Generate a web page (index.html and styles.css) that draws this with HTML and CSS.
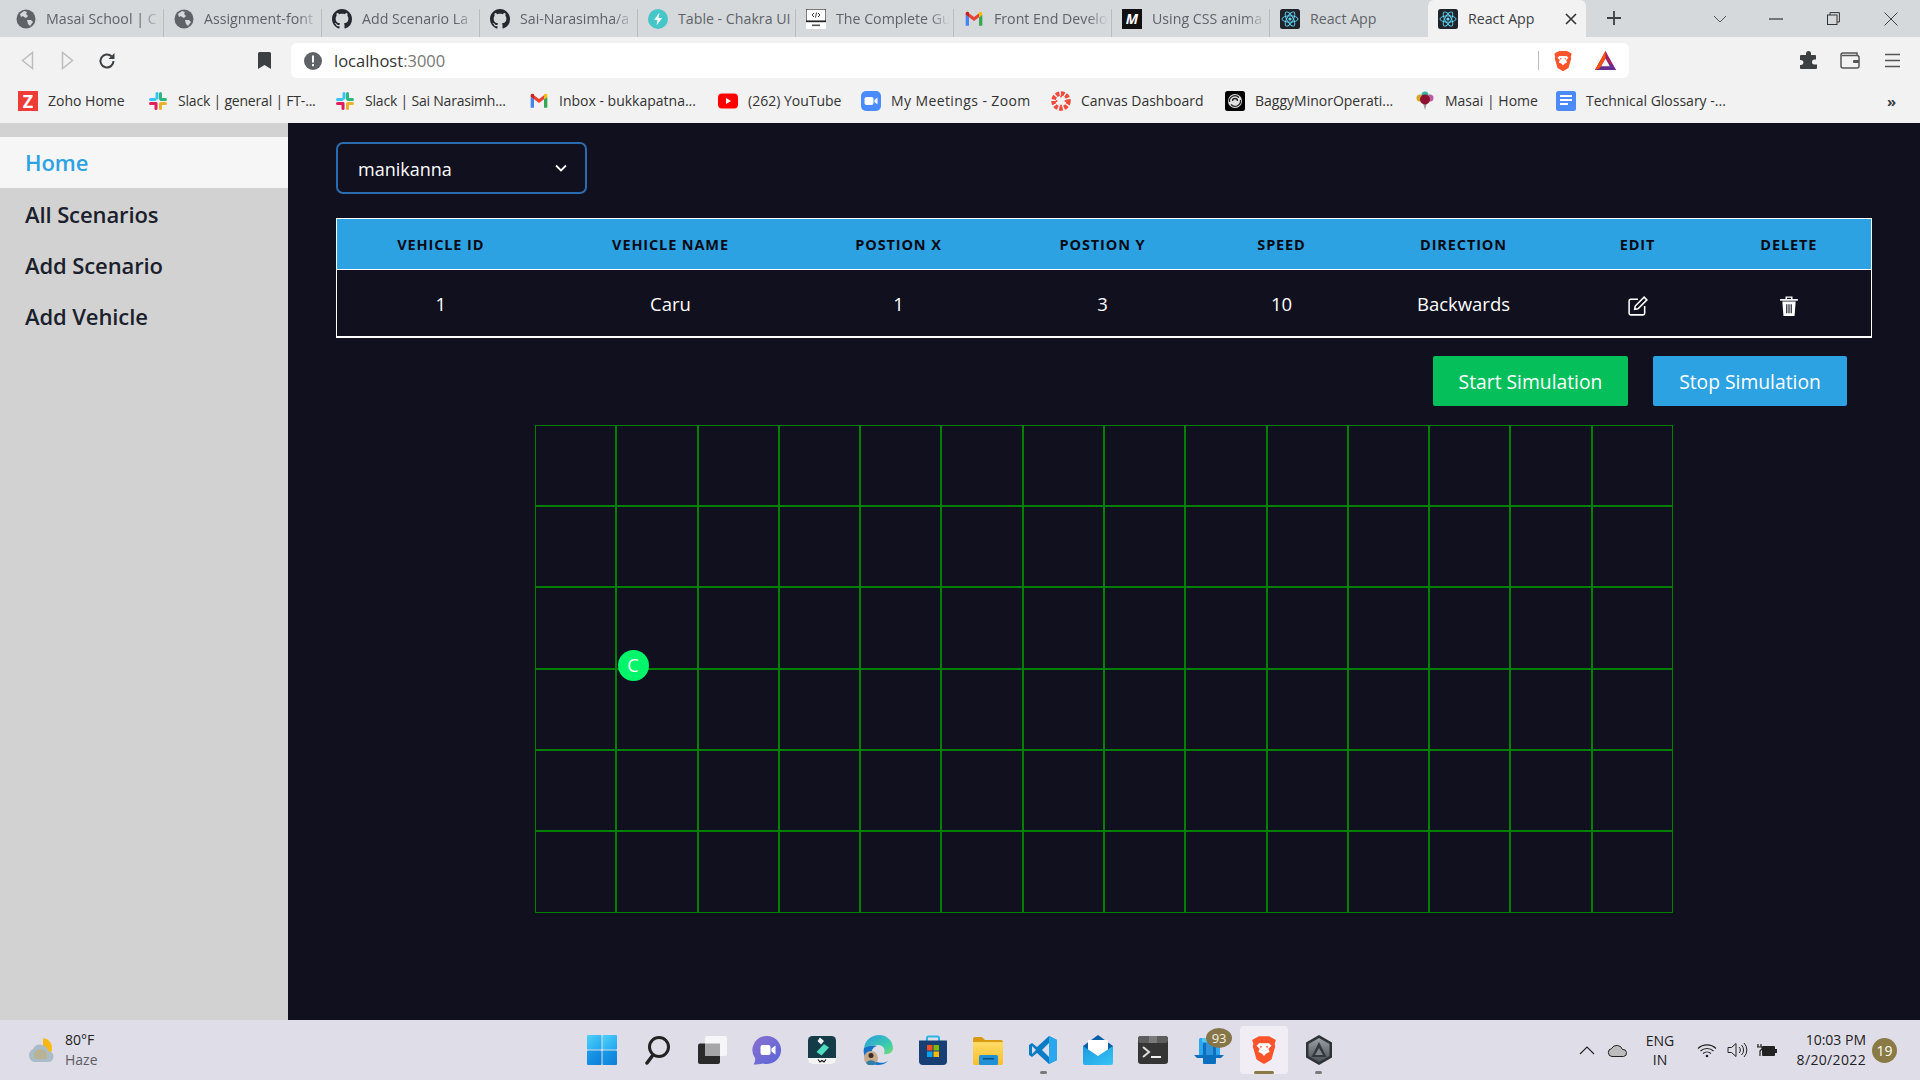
FILE: index.html
```html
<!DOCTYPE html>
<html lang="en">
<head>
  <meta charset="UTF-8" />
  <title>React App</title>
  <link rel="stylesheet" href="styles.css">
</head>
<body>
  <svg class="sprite" aria-hidden="true">
    <defs>
      <linearGradient id="winTop" x1="0" y1="0" x2="1" y2="1"><stop offset="0" stop-color="#4fd0fb"/><stop offset="1" stop-color="#1fa6ee"/></linearGradient>
      <linearGradient id="winBottom" x1="0" y1="0" x2="1" y2="1"><stop offset="0" stop-color="#1c9cea"/><stop offset="1" stop-color="#0c7fd8"/></linearGradient>
      <linearGradient id="chatGrad" x1="0" y1="0" x2="1" y2="1"><stop offset="0" stop-color="#8a70d0"/><stop offset="1" stop-color="#5a66d8"/></linearGradient>
      <linearGradient id="edgeGrad" x1="0" y1="0" x2="1" y2="1"><stop offset="0" stop-color="#2a9be0"/><stop offset=".7" stop-color="#3ecfa8"/><stop offset="1" stop-color="#7fdc6a"/></linearGradient>
      <linearGradient id="folderGrad" x1="0" y1="0" x2="0" y2="1"><stop offset="0" stop-color="#ffdc66"/><stop offset="1" stop-color="#f9bd2a"/></linearGradient>
      <linearGradient id="mailGrad" x1="0" y1="0" x2="1" y2="1"><stop offset="0" stop-color="#1b9ae0"/><stop offset="1" stop-color="#38c4f5"/></linearGradient>
      <linearGradient id="hexGrad" x1="0" y1="0" x2="0" y2="1"><stop offset="0" stop-color="#9aa0a6"/><stop offset="1" stop-color="#4a4f55"/></linearGradient>
    </defs>
    <symbol id="globe" viewBox="0 0 20 20">
      <circle cx="10" cy="10" r="9.500" fill="#5f6368"/>
      <path d="M4 5l4-3 3 1-1 2 2 2-2 2-2-1-1-1-2 1zM11 11l4 0 2 2-3 4-2-2z" fill="#d5d9dc"/>
    </symbol>
    <symbol id="github" viewBox="0 0 16 16">
      <path fill="#24292e" d="M8 0C3.58 0 0 3.58 0 8c0 3.54 2.29 6.53 5.47 7.59.4.07.55-.17.55-.38 0-.19-.01-.82-.01-1.49-2.01.37-2.53-.49-2.69-.94-.09-.23-.48-.94-.82-1.13-.28-.15-.68-.52-.01-.53.63-.01 1.08.58 1.23.82.72 1.21 1.87.87 2.33.66.07-.52.28-.87.51-1.07-1.78-.2-3.64-.89-3.64-3.95 0-.87.31-1.59.82-2.15-.08-.2-.36-1.02.08-2.12 0 0 .67-.21 2.2.82.64-.18 1.32-.27 2-.27.68 0 1.36.09 2 .27 1.53-1.04 2.2-.82 2.2-.82.44 1.1.16 1.92.08 2.12.51.56.82 1.27.82 2.15 0 3.07-1.87 3.75-3.65 3.95.29.25.54.73.54 1.48 0 1.07-.01 1.93-.01 2.2 0 .21.15.46.55.38A8.013 8.013 0 0016 8c0-4.42-3.58-8-8-8z"/>
    </symbol>
    <symbol id="chakra" viewBox="0 0 20 20">
      <circle cx="10" cy="10" r="10" fill="#45c7c9"/>
      <path d="M11.500 3.500L6 11h3.500l-1 5.500L14 9h-3.500z" fill="#fff"/>
    </symbol>
    <symbol id="monitor" viewBox="0 0 20 20">
      <rect width="20" height="20" fill="#fff"/>
      <rect x="0" y="0" width="20" height="12.500" fill="#fff" stroke="#222" stroke-width="1.200"/>
      <rect x="0" y="11.500" width="20" height="1.600" fill="#222"/>
      <path d="M8 4L6 6l2 2M12 4l2 2-2 2M10.500 3.500l-1 5" fill="none" stroke="#222" stroke-width=".9"/>
      <rect x="6" y="15.500" width="8" height="1.600" fill="#555"/>
    </symbol>
    <symbol id="gmail" viewBox="0 0 24 24">
      <path d="M2 20h4V10L2 7z" fill="#4285f4"/>
      <path d="M18 20h4V7l-4 3z" fill="#34a853"/>
      <path d="M18 5v5l4-3V5.500C22 3.500 19.700 2.700 18 4z" fill="#fbbc04"/>
      <path d="M6 10V5l6 4.500L18 5v5l-6 4.500z" fill="#ea4335"/>
      <path d="M2 5.500V7l4 3V5L6 4C4.300 2.700 2 3.500 2 5.500z" fill="#c5221f"/>
    </symbol>
    <symbol id="atom" viewBox="0 0 20 20">
      <rect width="20" height="20" rx="2.500" fill="#20232a"/>
      <g fill="none" stroke="#61dafb" stroke-width=".9">
        <ellipse cx="10" cy="10" rx="8" ry="3.200"/>
        <ellipse cx="10" cy="10" rx="8" ry="3.200" transform="rotate(60 10 10)"/>
        <ellipse cx="10" cy="10" rx="8" ry="3.200" transform="rotate(120 10 10)"/>
      </g>
      <circle cx="10" cy="10" r="1.600" fill="#61dafb"/>
    </symbol>
    <symbol id="slack" viewBox="0 0 20 20">
      <rect x="7.500" y="1" width="3" height="7.500" rx="1.500" fill="#36c5f0"/>
      <rect x="1" y="7" width="7.500" height="3" rx="1.500" fill="#36c5f0"/>
      <rect x="11.500" y="7" width="7.500" height="3" rx="1.500" fill="#2eb67d"/>
      <rect x="11" y="1" width="3" height="8" rx="1.500" fill="#2eb67d"/>
      <rect x="11.500" y="11" width="7.500" height="3" rx="1.500" fill="#ecb22e"/>
      <rect x="11" y="11.500" width="3" height="7.500" rx="1.500" fill="#ecb22e"/>
      <rect x="6.500" y="11" width="3" height="8" rx="1.500" fill="#e01e5a"/>
      <rect x="1" y="11" width="8" height="3" rx="1.500" fill="#e01e5a"/>
    </symbol>
    <symbol id="brave" viewBox="0 0 24 24">
      <path d="M5 2.500L8 1h8l3 1.500 2.500 1.500-1 3 .5 2-3 10.500L12.500 23h-1L6 19.500 3 9l.5-2-1-3z" fill="#fb542b"/>
      <path d="M8 6.500h8l2 2-2.500 2.500 1 2.500-3 1.500-1.500 2-1.500-2-3-1.500 1-2.500L6 8.500z" fill="#fff"/>
      <path d="M10.500 16.500h3l-1.500 1.500zM8.500 9h2l-1 1.500zM13.500 9h2l-1 1.500z" fill="#fb542b"/>
    </symbol>
  </svg>

  <header class="tabstrip">
    <div class="tab"><svg class="favicon"><use href="#globe"/></svg><span class="tab-title">Masai School | C</span></div>
    <div class="tab"><svg class="favicon"><use href="#globe"/></svg><span class="tab-title">Assignment-font</span></div>
    <div class="tab"><svg class="favicon"><use href="#github"/></svg><span class="tab-title">Add Scenario La</span></div>
    <div class="tab"><svg class="favicon"><use href="#github"/></svg><span class="tab-title">Sai-Narasimha/a</span></div>
    <div class="tab"><svg class="favicon"><use href="#chakra"/></svg><span class="tab-title tab-full">Table - Chakra UI</span></div>
    <div class="tab"><svg class="favicon"><use href="#monitor"/></svg><span class="tab-title">The Complete Gu</span></div>
    <div class="tab"><svg class="favicon"><use href="#gmail"/></svg><span class="tab-title">Front End Develo</span></div>
    <div class="tab"><span class="favicon medium-icon">M</span><span class="tab-title">Using CSS anima</span></div>
    <div class="tab tab-plain"><svg class="favicon"><use href="#atom"/></svg><span class="tab-title tab-full">React App</span></div>
    <div class="tab tab-active">
      <svg class="favicon"><use href="#atom"/></svg>
      <span class="tab-title tab-full">React App</span>
      <svg class="tab-close" viewBox="0 0 12 12"><path d="M1 1l10 10M11 1L1 11" stroke="#333" stroke-width="1.600"/></svg>
    </div>
    <svg class="new-tab" viewBox="0 0 16 16"><path d="M8 1v14M1 8h14" stroke="#3c4043" stroke-width="1.800"/></svg>
    <div class="win-controls">
      <div class="win-btn chevron-btn"><svg width="14" height="8" viewBox="0 0 14 8"><path d="M1 1l6 6 6-6" fill="none" stroke="#555" stroke-width="1"/></svg></div>
      <div class="win-btn"><svg width="14" height="2" viewBox="0 0 14 2"><path d="M0 1h14" stroke="#333" stroke-width="1.200"/></svg></div>
      <div class="win-btn"><svg width="13" height="13" viewBox="0 0 13 13"><path d="M3 3V.600h9.400V10H10" fill="none" stroke="#333"/><rect x=".5" y="3" width="9.500" height="9.500" fill="none" stroke="#333"/></svg></div>
      <div class="win-btn"><svg width="14" height="14" viewBox="0 0 14 14"><path d="M.5.500l13 13M13.500.500l-13 13" stroke="#444" stroke-width="1"/></svg></div>
    </div>
  </header>

  <div class="toolbar">
    <div class="tool-btn"><svg width="13" height="19" viewBox="0 0 13 19"><path d="M11.500 1.500v16L1.500 9.500z" fill="none" stroke="#bdbdbd" stroke-width="1.500"/></svg></div>
    <div class="tool-btn"><svg width="13" height="19" viewBox="0 0 13 19"><path d="M1.500 1.500v16l10-8z" fill="none" stroke="#bdbdbd" stroke-width="1.500"/></svg></div>
    <div class="tool-btn"><svg width="18" height="18" viewBox="0 0 18 18"><path d="M15.500 9a6.500 6.500 0 1 1-2-4.700" fill="none" stroke="#3c4043" stroke-width="2"/><path d="M16.500 1v6h-6z" fill="#3c4043"/></svg></div>
    <div class="tool-btn bookmark-btn"><svg width="13" height="17" viewBox="0 0 13 17"><path d="M0 1.500Q0 0 1.500 0h10Q13 0 13 1.500V17l-6.500-4L0 17z" fill="#3c4043"/></svg></div>
    <div class="address">
      <svg class="info-icon" viewBox="0 0 18 18"><circle cx="9" cy="9" r="9" fill="#5f6368"/><rect x="8" y="3.500" width="2" height="7" fill="#fff"/><rect x="8" y="12" width="2" height="2.200" fill="#fff"/></svg>
      <span class="url">localhost<span class="url-port">:3000</span></span>
      <span class="address-sep"></span>
      <svg class="brave-btn"><use href="#brave"/></svg>
      <svg class="bat-btn" viewBox="0 0 24 22"><path d="M12 1l11 20H1z" fill="#9e1f63"/><path d="M1 21l4-6h14l4 6z" fill="#662d91"/><path d="M12 1L1 21l5-2L12 8z" fill="#ff5000"/><path d="M12 9l-4.500 8h9z" fill="#f2f2f2"/></svg>
    </div>
    <div class="tool-right">
      <div class="tool-btn"><svg width="19" height="19" viewBox="0 0 19 19"><path d="M7 2.500a2.500 2.500 0 0 1 5 0V4h4a1 1 0 0 1 1 1v3.500h-1.500a2.500 2.500 0 0 0 0 5H18V17a1 1 0 0 1-1 1H2a1 1 0 0 1-1-1v-3h1a2.500 2.500 0 0 0 0-5H1V5a1 1 0 0 1 1-1h5z" fill="#3c4043"/></svg></div>
      <div class="tool-btn"><svg width="20" height="17" viewBox="0 0 20 17"><path d="M17 3.500V1H3Q1 1 1 3v11q0 2 2 2h14q2 0 2-2V5.500q0-2-2-2H2" fill="none" stroke="#555" stroke-width="1.500"/><rect x="13" y="8" width="6" height="3" rx="1" fill="#555"/></svg></div>
      <div class="tool-btn"><svg width="17" height="15" viewBox="0 0 17 15"><path d="M1 1.500h15M1 7.500h15M1 13.500h15" stroke="#555" stroke-width="1.600"/></svg></div>
    </div>
  </div>

  <nav class="bookmarks">
    <div class="bm"><span class="bm-icon zoho-icon">Z</span><span>Zoho Home</span></div>
    <div class="bm"><svg class="bm-icon"><use href="#slack"/></svg><span class="bm-tight">Slack | general | FT-...</span></div>
    <div class="bm"><svg class="bm-icon"><use href="#slack"/></svg><span class="bm-tight">Slack | Sai Narasimh...</span></div>
    <div class="bm"><svg class="bm-icon"><use href="#gmail"/></svg><span>Inbox - bukkapatna...</span></div>
    <div class="bm"><svg class="bm-icon" viewBox="0 0 20 20"><rect y="2.500" width="20" height="15" rx="4" fill="#f00"/><path d="M8 7v6l5-3z" fill="#fff"/></svg><span>(262) YouTube</span></div>
    <div class="bm"><svg class="bm-icon" viewBox="0 0 20 20"><rect width="20" height="20" rx="5" fill="#4a8cff"/><rect x="3.500" y="6" width="9" height="8" rx="2" fill="#fff"/><path d="M13.500 9l3-2.500v7l-3-2.500z" fill="#fff"/></svg><span class="bm-wide">My Meetings - Zoom</span></div>
    <div class="bm"><svg class="bm-icon" viewBox="0 0 20 20"><circle cx="10" cy="10" r="7.500" fill="none" stroke="#ef4a3c" stroke-width="4.500" stroke-dasharray="3.500 1.500"/><circle cx="10" cy="5.500" r="1" fill="#ef4a3c"/><circle cx="10" cy="14.500" r="1" fill="#ef4a3c"/><circle cx="5.500" cy="10" r="1" fill="#ef4a3c"/><circle cx="14.500" cy="10" r="1" fill="#ef4a3c"/></svg><span>Canvas Dashboard</span></div>
    <div class="bm"><svg class="bm-icon" viewBox="0 0 20 20"><rect width="20" height="20" rx="2.500" fill="#000"/><circle cx="10" cy="10" r="7" fill="#e2e2e2"/><path d="M4.500 11a5.500 5.500 0 0 1 9.500-4.500M15.500 9a5.500 5.500 0 0 1-9.500 4.500M7.500 10a2.500 2.500 0 0 1 5 0" fill="none" stroke="#222" stroke-width="1.300"/></svg><span>BaggyMinorOperati...</span></div>
    <div class="bm"><svg class="bm-icon" viewBox="0 0 20 20"><path d="M8 12l2 7h0l2-7z" fill="#9a9a9a"/><circle cx="5" cy="7" r="3.500" fill="#d9a520"/><circle cx="15" cy="7" r="3.500" fill="#c05aa0"/><circle cx="10" cy="4" r="3.500" fill="#36b4a0"/><circle cx="10" cy="8.500" r="5" fill="#8c1230"/></svg><span>Masai | Home</span></div>
    <div class="bm"><svg class="bm-icon" viewBox="0 0 20 20"><rect width="20" height="20" rx="2.500" fill="#4c8bf5"/><path d="M4 5h12M4 9h12M4 13h8" stroke="#fff" stroke-width="2"/></svg><span>Technical Glossary -...</span></div>
    <div class="bm-more">»</div>
  </nav>

  <div class="app">
    <aside class="sidebar">
      <a class="side-link side-active">Home</a>
      <a class="side-link">All Scenarios</a>
      <a class="side-link">Add Scenario</a>
      <a class="side-link">Add Vehicle</a>
    </aside>

    <main class="content">
      <div class="select-wrap">
        <select class="scenario-select" aria-label="Scenario">
          <option>manikanna</option>
        </select>
        <svg class="select-arrow" viewBox="0 0 12 8"><path d="M1 1.500l5 5 5-5" fill="none" stroke="#fff" stroke-width="1.800"/></svg>
      </div>

      <table class="vehicles">
        <colgroup>
          <col class="c1"><col class="c2"><col class="c3"><col class="c4"><col class="c5"><col class="c6"><col class="c7"><col class="c8">
        </colgroup>
        <thead>
          <tr>
            <th>Vehicle ID</th>
            <th>Vehicle Name</th>
            <th>Postion X</th>
            <th>Postion Y</th>
            <th>Speed</th>
            <th>Direction</th>
            <th>Edit</th>
            <th>Delete</th>
          </tr>
        </thead>
        <tbody>
          <tr>
            <td>1</td>
            <td>Caru</td>
            <td>1</td>
            <td>3</td>
            <td>10</td>
            <td>Backwards</td>
            <td><svg class="row-icon" viewBox="0 0 18 18"><path d="M9 3H2.500Q1 3 1 4.500v11Q1 17 2.500 17h11q1.500 0 1.500-1.500V9" fill="none" stroke="#fff" stroke-width="1.400"/><path d="M14.500 1L17 3.500 9 11.500l-3 .5.5-3z" fill="none" stroke="#fff" stroke-width="1.400"/></svg></td>
            <td><svg class="row-icon" viewBox="0 0 18 18"><path d="M1 3.500h16" stroke="#fff" stroke-width="1.500"/><path d="M6.500 3V1h5v2" fill="none" stroke="#fff" stroke-width="1.300"/><path d="M3 5h12l-1 13H4z" fill="#fff"/><path d="M7 7.500v8M9 7.500v8M11 7.500v8" stroke="#10101e" stroke-width="1"/></svg></td>
          </tr>
        </tbody>
      </table>

      <div class="sim-actions">
        <button class="sim-btn start-btn">Start Simulation</button>
        <button class="sim-btn stop-btn">Stop Simulation</button>
      </div>

      <div class="sim-grid">
        <div class="cell"></div><div class="cell"></div><div class="cell"></div><div class="cell"></div><div class="cell"></div><div class="cell"></div><div class="cell"></div><div class="cell"></div><div class="cell"></div><div class="cell"></div><div class="cell"></div><div class="cell"></div><div class="cell"></div><div class="cell"></div>
        <div class="cell"></div><div class="cell"></div><div class="cell"></div><div class="cell"></div><div class="cell"></div><div class="cell"></div><div class="cell"></div><div class="cell"></div><div class="cell"></div><div class="cell"></div><div class="cell"></div><div class="cell"></div><div class="cell"></div><div class="cell"></div>
        <div class="cell"></div><div class="cell"></div><div class="cell"></div><div class="cell"></div><div class="cell"></div><div class="cell"></div><div class="cell"></div><div class="cell"></div><div class="cell"></div><div class="cell"></div><div class="cell"></div><div class="cell"></div><div class="cell"></div><div class="cell"></div>
        <div class="cell"></div><div class="cell"></div><div class="cell"></div><div class="cell"></div><div class="cell"></div><div class="cell"></div><div class="cell"></div><div class="cell"></div><div class="cell"></div><div class="cell"></div><div class="cell"></div><div class="cell"></div><div class="cell"></div><div class="cell"></div>
        <div class="cell"></div><div class="cell"></div><div class="cell"></div><div class="cell"></div><div class="cell"></div><div class="cell"></div><div class="cell"></div><div class="cell"></div><div class="cell"></div><div class="cell"></div><div class="cell"></div><div class="cell"></div><div class="cell"></div><div class="cell"></div>
        <div class="cell"></div><div class="cell"></div><div class="cell"></div><div class="cell"></div><div class="cell"></div><div class="cell"></div><div class="cell"></div><div class="cell"></div><div class="cell"></div><div class="cell"></div><div class="cell"></div><div class="cell"></div><div class="cell"></div><div class="cell"></div>
        <div class="vehicle-dot">C</div>
      </div>
    </main>
  </div>

  <footer class="taskbar">
    <div class="weather">
      <svg class="weather-icon" viewBox="0 0 28 28"><path d="M17 2a10 10 0 0 1 9 11 9 9 0 0 1-2 5L17 12z" fill="#fdb813"/><path d="M8 26a7 7 0 0 1-1-13 8 8 0 0 1 15 2 5.500 5.500 0 0 1 0 11z" fill="#a9bcc7"/><path d="M9 23a6 6 0 0 1 2-9 7 7 0 0 1 10 4v5z" fill="#b8b394"/></svg>
      <div class="weather-text">
        <div>80°F</div>
        <div class="weather-sub">Haze</div>
      </div>
    </div>

    <div class="task-icons">
      <div class="task-icon"><svg viewBox="0 0 30 30"><rect width="14.500" height="14.500" rx="1" fill="url(#winTop)"/><rect x="15.500" width="14.500" height="14.500" rx="1" fill="url(#winTop)"/><rect y="15.500" width="14.500" height="14.500" rx="1" fill="url(#winBottom)"/><rect x="15.500" y="15.500" width="14.500" height="14.500" rx="1" fill="url(#winBottom)"/></svg></div>
      <div class="task-icon"><svg viewBox="0 0 30 30"><circle cx="17" cy="12" r="9.500" fill="none" stroke="#222" stroke-width="3"/><path d="M11 20l-6 8" stroke="#222" stroke-width="3.500" stroke-linecap="round"/></svg></div>
      <div class="task-icon"><svg viewBox="0 0 30 30"><rect x="1" y="8.500" width="22" height="20.500" rx="2" fill="#2a2a2a"/><rect x="8" y="1" width="22" height="20" rx="2" fill="#f6f6f8"/><rect x="8" y="8.500" width="15" height="12.500" fill="#a6a6a8"/></svg></div>
      <div class="task-icon"><svg viewBox="0 0 30 30"><path d="M15 1a14 14 0 1 1-4 27.400C8 29 5 29.500 1.500 29.500 3 27 3.500 25 3 23A14 14 0 0 1 15 1z" fill="url(#chatGrad)"/><rect x="8.500" y="10" width="10" height="10" rx="2" fill="#fff"/><path d="M19.500 13.500l4-3v9l-4-3z" fill="#fff"/></svg></div>
      <div class="task-icon"><svg viewBox="0 0 30 30"><rect x="1" y="1" width="28" height="28" rx="4.500" fill="#143c48"/><path d="M13 2.500l4 3.500-3 3.500-3.500-3.500z" fill="#f0f0f0"/><path d="M17 9l5 3.500-7.500 8-5-3.500z" fill="#4fdcc0"/><path d="M1 23h28v2a4 4 0 0 1-4 4H5a4 4 0 0 1-4-4z" fill="#f4f4f4"/><path d="M11 24.500l2 2.500 2-1.500 2 1.500 2-2.500" fill="none" stroke="#111" stroke-width="1.200"/></svg></div>
      <div class="task-icon"><svg viewBox="0 0 30 30"><path d="M1 13C2 5 9 0 16 0c8 0 14 6 14 13 0 4-4 7-9 6 2-5-1-9-6-9-6 0-11 1-14 3z" fill="url(#edgeGrad)"/><path d="M1 13c3-2 8-3 13-2-5 1-6 6-5 10 1 6 9 9 16 5-3 3-7 4-10 4C6 30-1 22 1 13z" fill="#1273c8"/><circle cx="8" cy="23" r="7" fill="#c7a98e"/><path d="M3 28a6 6 0 0 1 10 0l-2 2H5z" fill="#2f7fa8"/><circle cx="8" cy="20.500" r="2.500" fill="#3a2a22"/></svg></div>
      <div class="task-icon"><svg viewBox="0 0 30 30"><path d="M9 6V3q0-1.500 1.500-1.500h9Q21 1.500 21 3v3" fill="none" stroke="#2fb4e8" stroke-width="2"/><path d="M1 5.500h28v20.500q0 4-4 4H5q-4 0-4-4z" fill="#173f73"/><rect x="9" y="10" width="5.500" height="5.500" fill="#f25022"/><rect x="15.500" y="10" width="5.500" height="5.500" fill="#7fba00"/><rect x="9" y="16.500" width="5.500" height="5.500" fill="#00a4ef"/><rect x="15.500" y="16.500" width="5.500" height="5.500" fill="#ffb900"/></svg></div>
      <div class="task-icon"><svg viewBox="0 0 30 30"><path d="M0 4q0-2 2-2h7l3 3h16q2 0 2 2v6H0z" fill="#d99a12"/><path d="M0 7h30v21q0 2-2 2H2q-2 0-2-2z" fill="url(#folderGrad)"/><rect x="6" y="20" width="19" height="10" rx="1.500" fill="#1f8fd6"/><rect x="10" y="23" width="11" height="1.500" fill="#0b4f80"/></svg></div>
      <div class="task-icon running"><svg viewBox="0 0 30 30"><path d="M21 1l8 4v20l-8 4-12-11-5 4-3-2v-10l3-2 5 4z" fill="#0a7cc6"/><path d="M21 1l8 4v20l-8 4z" fill="#2aa7ef"/><path d="M21 8l-7 7 7 7z" fill="#dfdde8"/><path d="M4 11l4 4-4 4z" fill="#dfdde8"/></svg></div>
      <div class="task-icon"><svg viewBox="0 0 30 30"><path d="M15 0l15 11v4H0v-4z" fill="#0a5fa8"/><path d="M5 5h20v14L15 25 5 19z" fill="#fff"/><path d="M0 11l15 10 15-10v17q0 2-2 2H2q-2 0-2-2z" fill="url(#mailGrad)"/></svg></div>
      <div class="task-icon"><svg viewBox="0 0 30 30"><rect y="1" width="30" height="28" rx="3" fill="#353535"/><rect y="1" width="30" height="7" rx="3" fill="#5e5e5e"/><rect x="11" y="1" width="8" height="7" fill="#7a7a7a"/><path d="M5 12l6 5-6 5" fill="none" stroke="#ddd" stroke-width="2"/><rect x="13" y="21" width="10" height="2" fill="#eee"/></svg></div>
      <div class="task-icon"><svg viewBox="0 0 30 30"><rect x="5" y="3" width="21" height="18" rx="1.500" fill="#2aa7ef"/><rect x="8" y="3" width="16" height="4" fill="#56c6f5"/><path d="M0 20h30l-3 3H3z" fill="#0a6fbe"/><rect x="9" y="8" width="13" height="21" rx="1" fill="#0a6fbe"/><rect x="12" y="8" width="7" height="12" fill="#2f93dc"/></svg><span class="app-badge">93</span></div>
      <div class="task-icon task-active"><svg viewBox="0 0 24 24"><use href="#brave"/></svg></div>
      <div class="task-icon running"><svg viewBox="0 0 30 30"><path d="M15 0l13 7.500v15L15 30 2 22.500v-15z" fill="#2e3338"/><path d="M15 3l10.500 6v12L15 27 4.500 21V9z" fill="url(#hexGrad)"/><path d="M15 7L7.500 22h15z" fill="#33383d"/><path d="M15 13l-4 7h8z" fill="#7f858b"/></svg></div>
    </div>

    <div class="tray">
      <div class="tray-item"><svg width="16" height="9" viewBox="0 0 16 9"><path d="M1 8l7-7 7 7" fill="none" stroke="#222" stroke-width="1.100"/></svg></div>
      <div class="tray-item"><svg width="21" height="13" viewBox="0 0 21 13"><path d="M5 12.500a4 4 0 0 1-.500-7.900 6 6 0 0 1 11 .9 3.500 3.500 0 0 1 1 7z" fill="#bcbcbc" stroke="#222" stroke-width="1"/></svg></div>
      <div class="tray-lang"><div>ENG</div><div>IN</div></div>
      <div class="tray-item wifi-item"><svg width="20" height="15" viewBox="0 0 20 15"><path d="M1 5.500a13 13 0 0 1 18 0M3.500 8a9.500 9.500 0 0 1 13 0M6 10.500a6 6 0 0 1 8 0" fill="none" stroke="#222" stroke-width="1.100"/><circle cx="10" cy="13" r="1.300" fill="#222"/></svg></div>
      <div class="tray-item"><svg width="21" height="16" viewBox="0 0 21 16"><path d="M1 5.500h3.500L9 1.500v13l-4.500-4H1z" fill="none" stroke="#222"/><path d="M12 5a4 4 0 0 1 0 6M14.500 3a7 7 0 0 1 0 10M17 1a10 10 0 0 1 0 14" fill="none" stroke="#222"/></svg></div>
      <div class="tray-item"><svg width="20" height="15" viewBox="0 0 20 15"><rect x="5" y="3" width="13" height="10" rx="1" fill="#222"/><rect x="18" y="6" width="2" height="4" fill="#222"/><path d="M1 1v3M4 1v3M0 4h5v2l-2 2v5" fill="none" stroke="#222" stroke-width="1.200"/></svg></div>
      <div class="clock"><div>10:03 PM</div><div class="clock-date">8/20/2022</div></div>
      <div class="notif-badge">19</div>
    </div>
  </footer>
</body>
</html>
```

FILE: styles.css
```css
/* Reset */
* {
  box-sizing: border-box;
}
html, body {
  height: 100%;
}
body {
  margin: 0;
  display: flex;
  flex-direction: column;
  height: 100vh;
  overflow: hidden;
  font-family: 'Open Sans', 'Liberation Sans', sans-serif;
  color: #222;
  background: #10101e;
}
/* holds the shared symbols, display:none would break the gradients */
.sprite {
  position: absolute;
  width: 0;
  height: 0;
}

/* Browser tabs */
.tabstrip {
  flex: 0 0 37px;
  display: flex;
  padding-left: 6px;
  background: #d5d9dc;
}
.tab {
  width: 158px;
  height: 37px;
  padding: 9px 4px 0 10px;
  display: flex;
  align-items: flex-start;
  gap: 10px;
  font-size: 14.200px;
  color: #5f6368;
  position: relative;
}
.tab::after {
  content: "";
  position: absolute;
  right: 0;
  top: 9px;
  bottom: 0;
  width: 1px;
  background: #b9bdc1;
}
.tab-title {
  flex: 1;
  line-height: 19px;
  white-space: nowrap;
  overflow: hidden;
  -webkit-mask-image: linear-gradient(to right, #000 82%, transparent 100%);
  mask-image: linear-gradient(to right, #000 82%, transparent 100%);
}
.tab-full {
  -webkit-mask-image: none;
  mask-image: none;
}
.tab-plain::after,
.tab-active::after {
  display: none;
}
.tab-active {
  background: #f2f2f2;
  border-radius: 6px 6px 0 0;
  color: #3c4043;
}
.favicon {
  width: 20px;
  height: 20px;
  flex: none;
}
.medium-icon {
  background: #111;
  color: #fff;
  font-size: 14px;
  font-style: italic;
  font-weight: 700;
  line-height: 20px;
  text-align: center;
}
.tab-close {
  width: 12px;
  height: 12px;
  margin: 4px 5px 0 0;
  flex: none;
}
.new-tab {
  width: 16px;
  height: 16px;
  margin: 10px 0 0 20px;
  flex: none;
}
.win-controls {
  margin-left: auto;
  display: flex;
}
.win-btn {
  width: 57.500px;
  height: 37px;
  display: flex;
  align-items: center;
  justify-content: center;
}
.chevron-btn {
  width: 40px;
  margin-right: 8px;
}

/* Address bar row */
.toolbar {
  flex: 0 0 41px;
  display: flex;
  align-items: flex-start;
  padding: 6px 7px 0;
  background: #f2f2f2;
}
.tool-btn {
  width: 40px;
  height: 35px;
  display: flex;
  align-items: center;
  justify-content: center;
}
.bookmark-btn {
  margin-left: 117px;
  margin-right: 7px;
}
.address {
  width: 1338px;
  height: 35px;
  display: flex;
  align-items: center;
  padding-left: 13px;
  background: #fff;
  border-radius: 6px;
}
.info-icon {
  width: 18px;
  height: 18px;
}
.url {
  margin-left: 12px;
  font-size: 16.500px;
  color: #333;
}
.url-port {
  color: #777;
}
.address-sep {
  width: 1px;
  height: 19px;
  margin-left: auto;
  background: #bbb;
}
.brave-btn {
  width: 22px;
  height: 24px;
  margin-left: 13px;
}
.bat-btn {
  width: 23px;
  height: 21px;
  margin: 0 12px 0 20px;
}
.tool-right {
  margin-left: auto;
  display: flex;
}
.tool-right .tool-btn {
  width: 42px;
}

/* Bookmarks */
.bookmarks {
  flex: 0 0 45px;
  display: grid;
  grid-template-columns: 130px 187px 194px 189px 143px 190px 174px 190px 141px 331px 1fr;
  align-items: center;
  padding-left: 18px;
  font-size: 14px;
  color: #333;
  background: #f2f2f2;
}
.bm {
  display: flex;
  align-items: center;
  gap: 10px;
  white-space: nowrap;
}
.bm-tight {
  letter-spacing: -0.2px;
}
.bm-wide {
  letter-spacing: 0.4px;
}
.bm-icon {
  width: 20px;
  height: 20px;
  flex: none;
}
.zoho-icon {
  background: #ee3b36;
  color: #fff;
  font-size: 18px;
  font-weight: 700;
  line-height: 20px;
  text-align: center;
}
.bm-more {
  font-weight: 700;
  font-size: 15px;
  color: #3c4043;
}

/* App */
.app {
  flex: 1;
  display: flex;
  min-height: 0;
}
.sidebar {
  width: 288px;
  flex: none;
  padding-top: 14px;
  background: #d2d2d2;
}
.side-link {
  display: block;
  height: 51px;
  padding-left: 25px;
  font-size: 22px;
  font-weight: 600;
  line-height: 52px;
  letter-spacing: -0.1px;
  color: #1a202c;
}
.side-active {
  line-height: 50px;
  background: #f7f6f7;
  color: #2ca2e3;
}
.content {
  flex: 1;
  padding: 19px 49px 0 48px;
}
.select-wrap {
  position: relative;
  width: 251px;
}
.scenario-select {
  width: 100%;
  height: 52px;
  padding: 2px 40px 0 20px;
  appearance: none;
  font-family: inherit;
  font-size: 18px;
  color: #fff;
  background: #10101e;
  border: 2px solid #2b6cb0;
  border-radius: 7px;
  outline: none;
}
.select-arrow {
  position: absolute;
  right: 20px;
  top: 22px;
  width: 12px;
  height: 8px;
  pointer-events: none;
}
.vehicles {
  width: 100%;
  margin-top: 24px;
  table-layout: fixed;
  border-collapse: collapse;
  border: 1px solid #fff;
  border-bottom-width: 2px;
  color: #fff;
}
.c1 { width: 208px; }
.c2 { width: 252px; }
.c3 { width: 204px; }
.c4 { width: 204px; }
.c5 { width: 154px; }
.c6 { width: 210px; }
.c7 { width: 138px; }
.c8 { width: 165px; }
.vehicles th {
  height: 51px;
  padding: 0;
  background: #2ca2e3;
  color: #0a0a14;
  font-size: 14.500px;
  font-weight: 700;
  letter-spacing: 0.06em;
  text-transform: uppercase;
  border-bottom: 1px solid #fff;
}
.vehicles td {
  height: 67px;
  padding: 2px 0 0;
  text-align: center;
  font-size: 18.500px;
}
.row-icon {
  width: 20px;
  height: 20px;
  display: inline-block;
  vertical-align: middle;
}
.sim-actions {
  display: flex;
  justify-content: flex-end;
  gap: 25px;
  margin-top: 18px;
  padding-right: 25px;
}
.sim-btn {
  width: 195px;
  height: 50px;
  padding: 2px 0 0;
  font-family: inherit;
  font-size: 19.300px;
  color: #fff;
  border: none;
  border-radius: 2px;
}
.start-btn {
  background: #05bf5b;
}
.stop-btn {
  width: 194px;
  background: #2ca2e3;
}
.sim-grid {
  position: relative;
  width: 1138px;
  height: 488px;
  margin: 19px auto 0;
  display: grid;
  grid-template-columns: repeat(14, 1fr);
  grid-template-rows: repeat(6, 1fr);
}
.cell {
  border: 1px solid #008000;
}
.vehicle-dot {
  position: absolute;
  left: 82.500px;
  top: 225px;
  width: 31px;
  height: 31px;
  border-radius: 50%;
  background: #00f56a;
  color: #fff;
  font-size: 18px;
  line-height: 31px;
  text-align: center;
}

/* Windows taskbar */
.taskbar {
  flex: 0 0 60px;
  display: flex;
  align-items: center;
  background: #dfdde8;
}
.weather {
  width: 574px;
  flex: none;
  display: flex;
  align-items: center;
  gap: 11px;
  padding-left: 26px;
}
.weather-icon {
  width: 28px;
  height: 28px;
}
.weather-text {
  font-size: 14px;
  line-height: 20px;
}
.weather-sub {
  color: #5c5c66;
}
.task-icons {
  display: flex;
  width: 998px;
  flex: none;
}
.task-icon {
  position: relative;
  width: 55.200px;
  height: 48px;
  display: flex;
  align-items: center;
  justify-content: center;
  border-radius: 4px;
}
.task-icon svg {
  width: 30px;
  height: 30px;
}
.task-active {
  width: 48px;
  margin: 0 3.600px;
  background: #f0eef4;
}
.task-active::after {
  content: "";
  position: absolute;
  left: 14px;
  bottom: 0;
  width: 20px;
  height: 3px;
  border-radius: 2px;
  background: #8a7a45;
}
.running::after {
  content: "";
  position: absolute;
  left: 24px;
  bottom: 0;
  width: 7px;
  height: 3px;
  border-radius: 2px;
  background: #7a7a7a;
}
.app-badge {
  position: absolute;
  left: 25px;
  top: 2px;
  width: 26px;
  height: 20px;
  border-radius: 50%;
  background: #84764a;
  color: #f5f0dc;
  font-size: 13px;
  line-height: 20px;
  text-align: center;
}
.tray {
  display: flex;
  align-items: center;
  flex: 1;
  min-width: 0;
}
.tray-item {
  width: 30px;
  display: flex;
  align-items: center;
  justify-content: center;
}
.tray-lang {
  width: 56px;
  text-align: center;
  font-size: 14px;
  line-height: 19px;
}
.wifi-item {
  margin-left: 4px;
}
.clock {
  width: 84px;
  text-align: right;
  font-size: 14px;
  line-height: 20px;
}
.clock-date {
  letter-spacing: 0.35px;
}
.notif-badge {
  width: 25px;
  height: 25px;
  margin-left: 6px;
  border-radius: 50%;
  background: #8a7a45;
  color: #fff;
  font-size: 14px;
  line-height: 25px;
  text-align: center;
}
```
